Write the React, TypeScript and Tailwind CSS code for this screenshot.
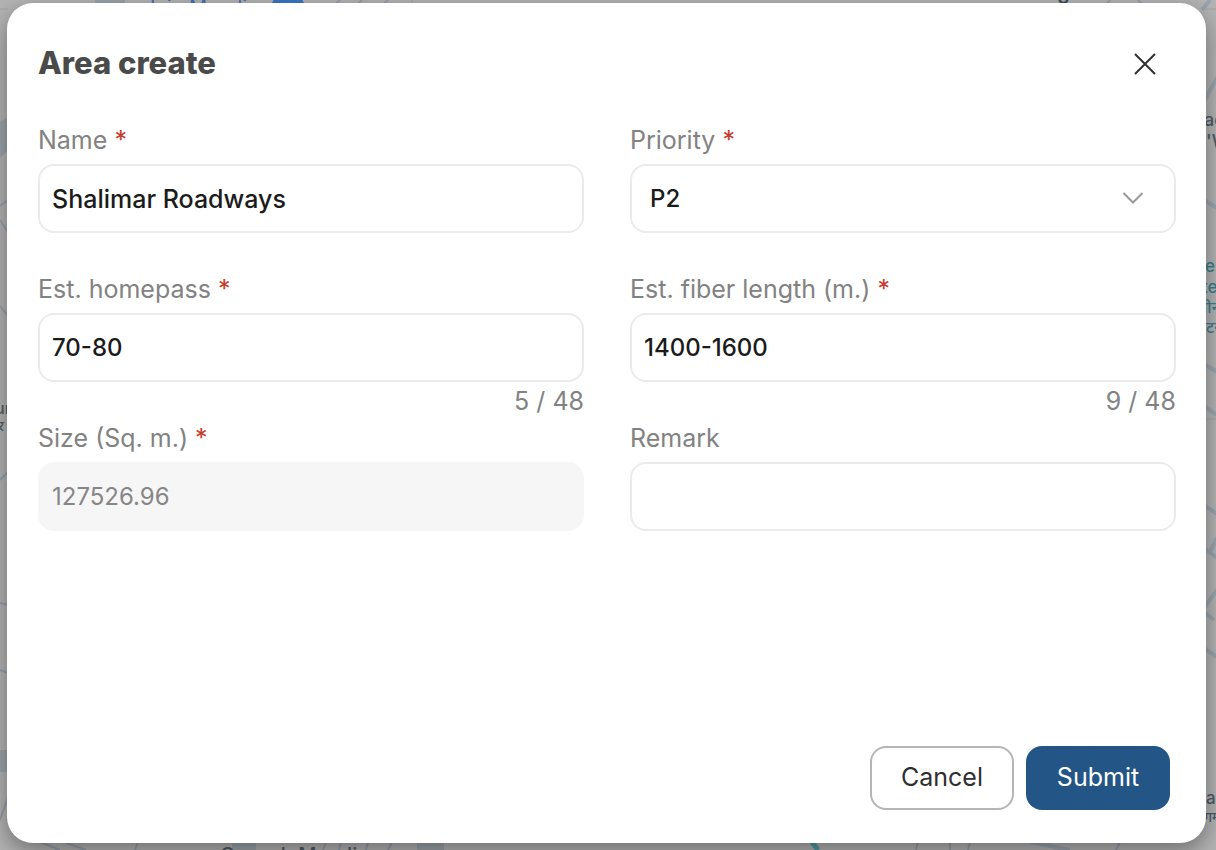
import type { ReactNode } from "react";

const control =
  "block h-[69px] w-full rounded-2xl border-2 border-[#ebebeb] bg-white font-medium text-[#1b1b1b] outline-none focus:border-[#235789]";

function MapBackdrop() {
  return (
    <svg
      className="absolute inset-0 h-full w-full"
      viewBox="0 0 1216 850"
      preserveAspectRatio="xMidYMid slice"
      fontFamily="Inter, 'Noto Sans', sans-serif"
      aria-hidden="true"
    >
      <rect width="1216" height="850" fill="#b4b4b4" />
      <g fill="#9da5aa">
        <rect x="0" y="750" width="7" height="22" />
        <rect x="95" y="0" width="30" height="4" />
        <rect x="232" y="842" width="24" height="8" />
        <rect x="417" y="842" width="27" height="8" />
        <path d="M0 122 L8 117 V150 L0 158 Z" />
      </g>
      <g stroke="#949eaa" strokeWidth="2" fill="none">
        <path d="M0 206 L8 200 M0 220 L8 232 M0 306 L8 316 M0 480 L8 472 M0 603 L8 605 M0 670 L8 673" />
        <path d="M0 820 L8 797 M40 842 L60 850 M64 842 L86 850 M138 842 L135 850 M326 842 L323 850 M341 842 L339 850 M368 842 L366 850 M392 842 L388 850" />
        <path d="M340 0 L336 4 M362 0 L358 4 M388 0 L384 4 M1110 0 L1107 4 M1138 0 L1142 4" />
        <path d="M918 842 L916 850 M950 842 V850 M970 842 L968 850 M1120 842 L1116 850" />
      </g>
      <g stroke="#9ba4ae" strokeWidth="4" fill="none">
        <path d="M1204 101 L1217 78 M1204 200 L1217 208 M1204 364 L1217 372 M1204 406 L1217 415 M1204 505 L1217 514 M1210 552 L1217 538" />
        <path d="M1204 548 L1217 558 M1204 608 L1217 590 M1204 612 L1214 620 M1204 648 L1217 657 M1202 10 L1210 0 M1030 842 L1070 850" />
      </g>
      <path d="M0 9 H8 M1203 9 H1216 M1206 419 H1216 M412 0 V4" stroke="#a3a3a3" />
      <circle cx="288" cy="9" r="17" fill="#3a78c8" />
      <path d="M812 842 L818 850" stroke="#4e9da6" strokeWidth="5" />
      <text x="144" y="14" fontSize="20" fill="#3f70bd">Jain Mandir</text>
      <text x="1048" y="4" fontSize="20" fontWeight="600" fill="#414e57">-9</text>
      <g fill="#505c66" fontWeight="500">
        <text x="1204" y="126" fontSize="18">ad</text>
        <text x="1206" y="148" fontSize="18">'W</text>
        <text x="1206" y="804" fontSize="17">ar</text>
        <text x="1204" y="822" fontSize="14">गम</text>
        <text x="-5" y="414" fontSize="16">ur</text>
        <text x="-2" y="431" fontSize="14">र</text>
        <text x="220" y="862" fontSize="20">Ganesh Mandir</text>
      </g>
      <g fill="#3d7f91" fontWeight="500">
        <text x="1205" y="272" fontSize="17">en</text>
        <text x="1202" y="293" fontSize="17">ter</text>
        <text x="1198" y="313" fontSize="16">तीन</text>
        <text x="1206" y="333" fontSize="16">टर</text>
      </g>
    </svg>
  );
}

interface FieldProps {
  id: string;
  label: string;
  required?: boolean;
  count?: string;
  children: ReactNode;
}

function Field({ id, label, required, count, children }: FieldProps) {
  return (
    <div className="min-w-0">
      <label htmlFor={id} className="mb-[6px] block text-[25px] leading-9 text-[#828282]">
        {label}
        {required && <span className="text-[#c93a2b]"> *</span>}
      </label>
      {children}
      {count ? (
        <p className="text-right text-[25px] leading-[38px] text-[#828282]">{count}</p>
      ) : (
        <div className="h-[38px]" />
      )}
    </div>
  );
}

export default function App() {
  return (
    <div className="relative flex min-h-screen overflow-hidden bg-[#b4b4b4] pt-[3px] pr-[10px] pb-[7px] pl-[7px] font-[Inter,sans-serif]">
      <MapBackdrop />
      <form
        role="dialog"
        aria-labelledby="dialog-title"
        onSubmit={(event) => event.preventDefault()}
        className="relative flex flex-1 flex-col rounded-[26px] bg-white pr-[30px] pb-[33px] pl-[31px] shadow-[0_8px_24px_rgba(0,0,0,0.4)]"
      >
        <header className="mb-[14px] flex h-[105px] items-center justify-between">
          <h1 id="dialog-title" className="pt-[13px] text-[31px] leading-[45px] font-extrabold text-[#4a4a4a]">
            Area create
          </h1>
          <button type="button" aria-label="Close" className="mt-4 mr-[15px] flex size-8 items-center justify-center">
            <svg viewBox="0 0 24 24" className="size-6" fill="none" stroke="#2e2e2e" strokeWidth="1.9">
              <path d="M2 2 L22 22 M22 2 L2 22" />
            </svg>
          </button>
        </header>

        <div className="grid grid-cols-2 gap-x-[46px]">
          <Field id="name" label="Name" required>
            <input id="name" defaultValue="Shalimar Roadways" className={`${control} px-3 text-[25px]`} />
          </Field>
          <Field id="priority" label="Priority" required>
            <div className="relative">
              <select id="priority" defaultValue="P2" className={`${control} appearance-none px-[18px] text-2xl`}>
                <option>P1</option>
                <option>P2</option>
                <option>P3</option>
              </select>
              <svg
                viewBox="0 0 24 24"
                className="pointer-events-none absolute top-[22px] right-[31px] size-6"
                fill="none"
                stroke="#999999"
                strokeWidth="2"
              >
                <path d="M2.5 7 L12 16.5 L21.5 7" />
              </svg>
            </div>
          </Field>
          <Field id="homepass" label="Est. homepass" required count="5 / 48">
            <input id="homepass" defaultValue="70-80" maxLength={48} className={`${control} px-3 text-2xl`} />
          </Field>
          <Field id="fiber" label="Est. fiber length (m.)" required count="9 / 48">
            <input id="fiber" defaultValue="1400-1600" maxLength={48} className={`${control} px-3 text-2xl`} />
          </Field>
          <Field id="size" label="Size (Sq. m.)" required>
            <input
              id="size"
              disabled
              defaultValue="127526.96"
              className="block h-[69px] w-full rounded-2xl bg-[#f6f6f6] px-3.5 text-2xl text-[#868686]"
            />
          </Field>
          <Field id="remark" label="Remark">
            <input id="remark" className={`${control} px-3 text-2xl`} />
          </Field>
        </div>

        <footer className="mt-auto flex justify-end gap-3 pr-[6px]">
          <button
            type="button"
            className="h-16 w-36 rounded-2xl border-2 border-[#b5b5b5] bg-white text-[25px] text-[#2f2f2f]"
          >
            Cancel
          </button>
          <button type="submit" className="h-16 w-36 rounded-2xl bg-[#235686] text-[25px] text-white">
            Submit
          </button>
        </footer>
      </form>
    </div>
  );
}
